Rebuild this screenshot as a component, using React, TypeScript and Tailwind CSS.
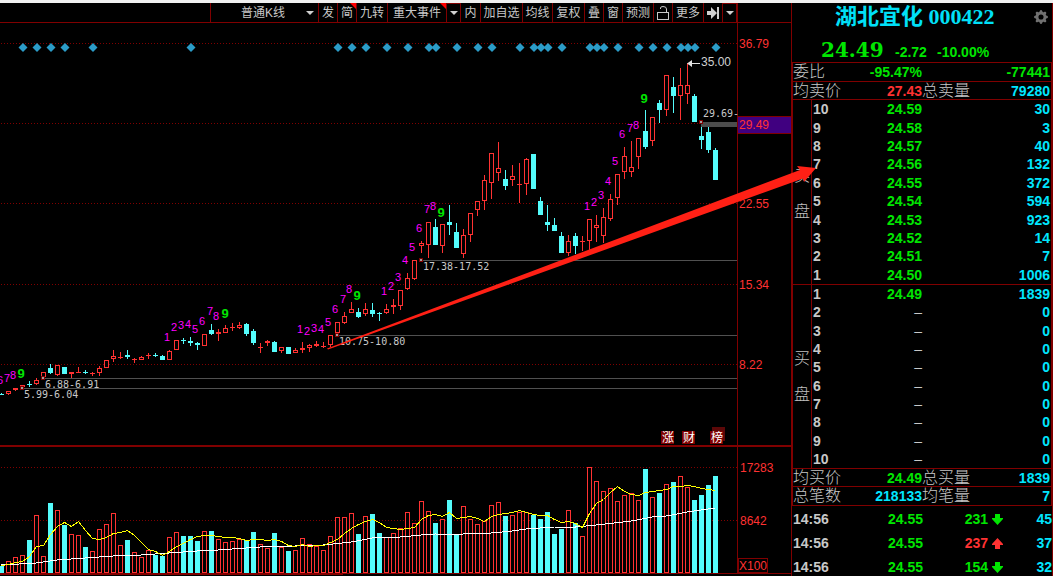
import React from "react";
import { BsGearFill } from "react-icons/bs";

type Candle = [kind: "r" | "f" | "c", high: number, top: number, bottom: number, low: number, volume: number];

// r = hollow rising, f = solid rising, c = falling; values are y positions on the shared chart canvas
const candles: Candle[] = [
  ["c", 393, 394, 395, 395, 566], ["r", 391, 391, 394, 395, 561], ["f", 388, 388, 390, 391, 557], ["f", 385, 385, 387, 388, 555],
  ["c", 381, 384, 385, 387, 540], ["r", 378, 380, 384, 385, 515], ["r", 372, 372, 377, 377, 556], ["c", 364, 368, 373, 374, 503],
  ["r", 365, 365, 375, 376, 510], ["c", 367, 367, 374, 374, 525], ["f", 372, 372, 374, 378, 534], ["f", 367, 372, 373, 373, 535],
  ["c", 370, 372, 373, 374, 547], ["f", 372, 373, 374, 376, 551], ["r", 366, 368, 373, 376, 529], ["r", 360, 360, 368, 368, 524],
  ["r", 350, 356, 359, 362, 513], ["f", 352, 357, 358, 359, 545], ["c", 350, 355, 357, 359, 540], ["f", 358, 359, 360, 363, 552],
  ["r", 356, 357, 360, 360, 557], ["f", 353, 355, 356, 359, 550], ["c", 353, 355, 356, 357, 555], ["c", 355, 356, 360, 360, 556],
  ["r", 350, 351, 360, 360, 537], ["r", 340, 340, 350, 350, 532], ["c", 338, 340, 341, 344, 536], ["c", 337, 341, 343, 346, 536],
  ["c", 342, 343, 345, 350, 541], ["r", 334, 334, 346, 346, 531], ["c", 324, 330, 334, 335, 531], ["f", 329, 332, 334, 341, 539],
  ["r", 325, 328, 333, 333, 542], ["f", 323, 327, 328, 331, 541], ["r", 322, 325, 328, 329, 539], ["c", 323, 324, 334, 336, 540],
  ["c", 329, 331, 343, 345, 532], ["f", 343, 347, 348, 353, 544], ["f", 340, 341, 343, 346, 548], ["c", 341, 342, 352, 352, 533],
  ["r", 347, 347, 351, 353, 547], ["c", 347, 347, 354, 354, 551], ["r", 348, 350, 353, 353, 550], ["f", 342, 348, 350, 353, 538],
  ["r", 344, 345, 348, 352, 544], ["f", 341, 344, 346, 347, 546], ["f", 342, 346, 347, 348, 550], ["r", 335, 335, 345, 347, 536],
  ["r", 322, 322, 333, 334, 517], ["r", 312, 316, 323, 324, 517], ["r", 302, 309, 313, 313, 513], ["c", 308, 312, 317, 318, 534],
  ["r", 303, 309, 314, 316, 516], ["c", 303, 310, 314, 317, 514], ["c", 312, 313, 314, 321, 533], ["r", 304, 309, 313, 314, 537],
  ["f", 299, 305, 307, 314, 533], ["r", 290, 290, 306, 310, 528], ["r", 273, 278, 289, 290, 512], ["r", 260, 260, 279, 280, 523],
  ["r", 241, 243, 246, 253, 501], ["r", 222, 222, 245, 258, 511], ["c", 219, 227, 245, 245, 523], ["r", 224, 224, 246, 253, 519],
  ["c", 205, 222, 225, 235, 500], ["c", 223, 232, 248, 248, 535], ["r", 229, 235, 254, 258, 506], ["r", 213, 213, 235, 242, 519],
  ["r", 201, 201, 210, 216, 524], ["r", 175, 180, 201, 210, 521], ["r", 153, 153, 183, 199, 505], ["r", 142, 168, 173, 181, 502],
  ["c", 170, 179, 186, 190, 516], ["r", 165, 176, 180, 186, 515], ["f", 163, 184, 185, 203, 512], ["r", 158, 159, 184, 195, 512],
  ["c", 154, 154, 189, 189, 515], ["c", 197, 201, 215, 215, 519], ["c", 205, 222, 225, 231, 512], ["c", 218, 225, 231, 231, 534],
  ["c", 232, 236, 253, 253, 529], ["r", 235, 241, 253, 256, 510], ["c", 233, 236, 246, 254, 523], ["f", 236, 241, 242, 251, 536],
  ["r", 219, 219, 241, 255, 467], ["r", 215, 225, 228, 242, 481], ["r", 208, 217, 236, 243, 491], ["r", 194, 199, 219, 221, 488],
  ["r", 174, 174, 198, 205, 501], ["r", 147, 156, 172, 179, 495], ["r", 141, 167, 172, 177, 493], ["r", 138, 138, 157, 169, 500],
  ["c", 110, 131, 147, 149, 469], ["r", 117, 117, 141, 146, 497], ["c", 100, 103, 110, 123, 493], ["r", 75, 75, 110, 116, 484],
  ["c", 77, 87, 96, 113, 482], ["r", 68, 85, 96, 120, 476], ["r", 63, 85, 94, 104, 487], ["c", 94, 96, 122, 122, 500],
  ["c", 127, 136, 140, 149, 495], ["c", 127, 132, 150, 153, 485], ["c", 148, 150, 180, 180, 476],
];

const fastAverage = [
  565, 564, 562, 561, 556, 546, 545, 534, 526, 522, 526, 521, 530, 538, 539, 537, 533, 532, 530, 535, 542, 549, 551, 555, 551, 546,
  543, 539, 536, 535, 535, 536, 537, 537, 538, 540, 539, 539, 540, 539, 541, 545, 546, 544, 546, 545, 545, 542, 539, 533, 528, 524,
  521, 519, 522, 527, 528, 529, 528, 527, 519, 515, 514, 516, 512, 518, 517, 516, 518, 521, 516, 514, 513, 512, 510, 512, 514, 515,
  515, 519, 522, 521, 523, 527, 513, 503, 499, 492, 486, 491, 494, 495, 492, 491, 490, 489, 486, 486, 485, 486, 488, 489, 490,
];

const slowAverage: [number, number][] = [
  [0, 565], [5, 563], [8, 560], [14, 557], [16, 556], [20, 555], [24, 553], [28, 551], [31, 550], [35, 548], [37, 547], [42, 546],
  [46, 545], [50, 542], [53, 538], [57, 537], [60, 535], [62, 534], [63, 535], [66, 534], [70, 533], [73, 531], [75, 529], [79, 527],
  [82, 527], [85, 525], [90, 521], [93, 517], [95, 516], [98, 512], [102, 508],
];

const events = [3, 5, 7, 9, 13, 27, 48, 50, 52, 55, 58, 61, 62, 65, 68, 70, 74, 76, 77, 78, 80, 84, 85, 86, 88, 91, 93, 95, 97, 98, 99, 102];

const counts: [number, number, number][] = [
  [6, 0, 380], [7, 7, 378], [8, 13, 375], [9, 21, 374],
  [1, 167, 337], [2, 174, 327], [3, 181, 325], [4, 188, 324], [5, 195, 329], [6, 202, 321], [7, 210, 311], [8, 216, 316], [9, 225, 314],
  [1, 300, 329], [2, 307, 331], [3, 314, 328], [4, 321, 329], [5, 328, 322], [6, 335, 309], [7, 343, 299], [8, 349, 289], [9, 357, 296],
  [1, 384, 291], [2, 391, 286], [3, 398, 277], [4, 405, 260], [5, 412, 247], [6, 419, 228], [7, 427, 209], [8, 433, 206], [9, 441, 213],
  [1, 587, 206], [2, 594, 202], [3, 601, 195], [4, 608, 181], [5, 615, 161], [6, 622, 134], [7, 630, 128], [8, 636, 125], [9, 644, 99],
];

const gaps: [string, number, number][] = [
  ["5.99-6.04", 22, 388],
  ["6.88-6.91", 43, 378],
  ["10.75-10.80", 337, 335],
  ["17.38-17.52", 421, 260],
];

const priceTicks: [string, number][] = [["36.79", 43], ["29.49", 124], ["22.55", 203], ["15.34", 284], ["8.22", 364]];
const volumeTicks: [string, number][] = [["17283", 467], ["8642", 520]];

const RED = "#ff3232";
const CYAN = "#54fcfc";
const LINE = "#800000";
const center = (i: number) => 1 + 7 * i;

function GridLine({ y }: { y: number }) {
  return <line x1="1" x2="737" y1={y + 0.5} y2={y + 0.5} stroke={LINE} strokeDasharray="1 2" />;
}

function PriceChart() {
  return (
    <svg viewBox="0 23 791 422" className="block w-full" shapeRendering="crispEdges" role="img" aria-label="K线图">
      {priceTicks.map(([t, y]) => <GridLine key={t} y={y === 124 ? 123 : y} />)}
      <line x1="737.5" x2="737.5" y1="23" y2="445" stroke={LINE} />
      <rect x="738" y="116" width="53" height="18" fill={LINE} />
      <rect x="738" y="117" width="53" height="16" fill="#400080" />
      {gaps.map(([t, x, y]) => <rect key={t} x={x} y={y} width={737 - x} height="1" fill="#505050" />)}
      <rect x="701" y="122" width="36" height="5" fill="#4c4c4c" />
      {events.map((i) => {
        const x = center(i) + 1;
        return <path key={i} d={`M${x - 4.5} 47.5L${x} 43L${x + 4.5} 47.5L${x} 52Z`} fill="#2b9cc8" shapeRendering="auto" />;
      })}
      {candles.map(([kind, high, top, bottom, low], i) => {
        const x = center(i);
        const color = kind === "c" ? CYAN : RED;
        return (
          <g key={i}>
            <rect x={x} y={high} width="1" height={Math.max(low - high, 1)} fill={color} />
            {kind === "r" ? (
              <rect x={x - 1.5} y={top + 0.5} width="4" height={bottom - top - 1} fill="#000" stroke={color} />
            ) : (
              <rect x={x - 2} y={top} width="5" height={bottom - top} fill={color} />
            )}
          </g>
        );
      })}
      {[...gaps, ["29.69", 701, 122] as [string, number, number]].map(([t, x, y]) => (
        <g key={t}>
          <rect x={x - 2} y={y - 2} width="4" height="4" fill={LINE} />
          <rect x={x - 1} y={y - 1} width="2" height="2" fill="#a0a0a0" />
        </g>
      ))}
      <g fontFamily='"DejaVu Sans Mono", "Liberation Mono", monospace' fontSize="10" fill="#c8c8c8">
        {gaps.map(([t, x, y]) => <text key={t} x={x + 2} y={y + 10}>{t}</text>)}
        <text x="703" y="117">29.69-</text>
      </g>
      <g fontFamily='"Liberation Sans", Arial, sans-serif' fontSize="12" textAnchor="middle">
        {counts.map(([n, x, y]) => (
          <text key={`${n}-${x}`} x={x} y={y + 4} fill={n === 9 ? "#00e600" : "#ff00ff"} fontWeight={n === 9 ? 700 : 400} fontSize={n === 9 ? 13 : 11}>
            {n}
          </text>
        ))}
      </g>
      <g fontFamily='"Liberation Sans", Arial, sans-serif' fontSize="12">
        <path d="M687 63.5L692 60V63H700V64H692V67Z" fill="#e0e0e0" shapeRendering="auto" />
        <text x="701" y="66" fill="#d0d0d0">35.00</text>
        {priceTicks.map(([t, y]) => <text key={t} x="739" y={y + 5} fill={RED}>{t}</text>)}
      </g>
      <rect x="712" y="427" width="13" height="14" fill="#5c0808" />
      {[["涨", 661], ["财", 682], ["榜", 710]].map(([t, x]) => (
        <g key={t}>
          <rect x={x} y="431" width="13" height="13" fill={LINE} />
          <text x={Number(x) + 1} y="442" fontSize="12" fill="#fff" fontFamily='"Noto Sans CJK SC", sans-serif'>{t}</text>
        </g>
      ))}
    </svg>
  );
}

function VolumeChart() {
  return (
    <svg viewBox="0 447 791 129" className="block w-full" shapeRendering="crispEdges" role="img" aria-label="成交量">
      {volumeTicks.map(([t, y]) => <GridLine key={t} y={y} />)}
      <line x1="737.5" x2="737.5" y1="447" y2="573" stroke={LINE} />
      {candles.map(([kind, , , , , top], i) =>
        kind === "c" ? (
          <rect key={i} x={center(i) - 2} y={top} width="5" height={573 - top} fill={CYAN} />
        ) : (
          <rect key={i} x={center(i) - 1.5} y={top + 0.5} width="4" height={572 - top} fill="#000" stroke={RED} />
        ),
      )}
      <polyline fill="none" stroke="#fff" points={slowAverage.map(([i, y]) => `${center(i) + 0.5},${y}`).join(" ")} />
      <polyline fill="none" stroke="#ff0" points={fastAverage.map((y, i) => `${center(i) + 0.5},${y + 0.5}`).join(" ")} />
      <rect x="0" y="573" width="791" height="1" fill={LINE} />
      <rect x="0" y="574" width="343" height="1" fill={LINE} />
      <rect x="738.5" y="558.5" width="29" height="14" fill="#000" stroke={LINE} />
      <g fontFamily='"Liberation Sans", Arial, sans-serif' fontSize="12" fill={RED}>
        {volumeTicks.map(([t, y]) => <text key={t} x="740" y={y + 5}>{t}</text>)}
        <text x="739" y="570">X100</text>
      </g>
    </svg>
  );
}

function Caret() {
  return (
    <svg viewBox="0 0 8 4" className="h-1 w-2" aria-hidden="true">
      <path d="M0 0H8L4 4Z" fill="#d0d0d0" />
    </svg>
  );
}

function Corner() {
  return (
    <svg viewBox="0 0 6 6" className="absolute right-0 top-0 size-1.5" aria-hidden="true">
      <path d="M0 0H6V6Z" fill="#f00" />
    </svg>
  );
}

const cell = "relative flex h-full shrink-0 items-center justify-center border-l border-[#800000]";

function Toolbar() {
  return (
    <div className="flex h-5 border-b border-[#800000] text-[12px] leading-4 text-[#c8c8c8]">
      <div className="flex w-[737px] justify-end">
        <label className={`${cell} w-[108px]`}>
          <select aria-label="K线类型" className="h-full w-full appearance-none bg-transparent pl-[30px] outline-none">
            <option>普通K线</option>
          </select>
          <span className="pointer-events-none absolute right-1"><Caret /></span>
        </label>
        <button className={`${cell} w-[19px]`}>发</button>
        <button className={`${cell} w-[19px]`}>简<Corner /></button>
        <button className={`${cell} w-[31px]`}>九转</button>
        <button className={`${cell} w-[59px]`}>重大事件<Corner /></button>
        <button aria-label="更多事件" className={`${cell} w-[15px] border-r border-t`}><Caret /></button>
        <button className={`${cell} w-[19px] border-l-0`}>内</button>
        <button className={`${cell} w-[42px]`}>加自选</button>
        <button className={`${cell} w-[30px]`}>均线</button>
        <button className={`${cell} w-[32px]`}>复权</button>
        <button className={`${cell} w-[19px]`}>叠</button>
        <button className={`${cell} w-[19px]`}>窗</button>
        <button className={`${cell} w-[31px]`}>预测</button>
        <button aria-label="解锁" className={`${cell} w-[19px]`}>
          <svg viewBox="0 0 12 14" className="h-3.5 w-3" fill="none" stroke="#c8c8c8" aria-hidden="true">
            <rect x="0.5" y="6.5" width="11" height="7" />
            <path d="M3.5 3V2Q3.5 0.5 6 0.5Q9.5 0.5 9.5 3V6.5" />
          </svg>
        </button>
        <button className={`${cell} w-[31px]`}>更多</button>
        <button aria-label="跳到最新" className={`${cell} w-[19px]`}>
          <svg viewBox="0 0 12 12" className="size-3" fill="#d0d0d0" aria-hidden="true">
            <path d="M0 4H4V0L10 6L4 12V8H0ZM10 0H12V12H10Z" />
          </svg>
        </button>
        <button aria-label="菜单" className={`${cell} w-[15px] border-r border-t`}><Caret /></button>
      </div>
      <div className="flex-1 border-l border-[#800000] bg-black" />
    </div>
  );
}

const sells: [string, string][] = [
  ["24.59", "30"], ["24.58", "3"], ["24.57", "40"], ["24.56", "132"], ["24.55", "372"],
  ["24.54", "594"], ["24.53", "923"], ["24.52", "14"], ["24.51", "7"], ["24.50", "1006"],
];

const buys: [string, string][] = [["24.49", "1839"], ...Array.from({ length: 9 }, (): [string, string] => ["–", "0"])];

function Book({ side, rows, descending }: { side: string; rows: [string, string][]; descending?: boolean }) {
  return (
    <table
      className={`${descending ? "h-[185px]" : "h-[184px]"} w-full table-fixed border-separate border-spacing-0 border-b border-[#800000] leading-4`}
    >
      <colgroup>
        <col className="w-[19px]" />
        <col className="w-[30px]" />
        <col className="w-[80px]" />
        <col />
      </colgroup>
      <tbody>
        {rows.map(([price, size], i) => (
          <tr key={i}>
            {i === 0 && (
              <th
                rowSpan={10}
                scope="rowgroup"
                className={`${descending ? "pt-1" : "pt-0"} border-r border-[#800000] px-0 pb-0 text-[16px] font-light text-[#c0c0c0]`}
              >
                <span className="flex flex-col items-center gap-5">
                  <span>{side}</span>
                  <span>盘</span>
                </span>
              </th>
            )}
            <td className="p-0 pl-px">{descending ? 10 - i : i + 1}</td>
            <td className={price === "–" ? "p-0 text-right font-normal" : "p-0 text-right text-[#00e600]"}>{price}</td>
            <td className="p-0 pr-px text-right text-[#00e6ff]">{size}</td>
          </tr>
        ))}
      </tbody>
    </table>
  );
}

interface StatProps {
  label: string;
  value: string;
  tone: string;
  label2?: string;
  value2: string;
  tone2: string;
  tall?: boolean;
}

function Stat({ label, value, tone, label2, value2, tone2, tall }: StatProps) {
  return (
    <div className={`${tall ? "h-[19px]" : "h-[18px]"} flex items-center border-b border-[#800000] leading-4`}>
      <span className="w-12 text-[16px] font-light">{label}</span>
      <span className={`w-[81px] text-right ${tone}`}>{value}</span>
      <span className="text-[16px] font-light">{label2}</span>
      <span className={`flex-1 pr-px text-right ${tone2}`}>{value2}</span>
    </div>
  );
}

const trades: [string, string, string, boolean, string][] = [
  ["14:56", "24.55", "231", false, "45"],
  ["14:56", "24.55", "237", true, "37"],
  ["14:56", "24.55", "154", false, "32"],
];

function QuotePanel() {
  return (
    <aside className="w-[262px] shrink-0 border-x border-[#800000] text-[14px] font-bold text-[#c8c8c8]">
      <header className="relative h-[59px]">
        <h1 className="pl-[43px] pt-0.5 font-['Liberation_Serif','Noto_Sans_CJK_SC',serif] text-[22px] font-bold leading-6 text-[#00e0f8]">
          湖北宜化 000422
        </h1>
        <button aria-label="设置" className="absolute right-1 top-[7px] text-[#707070]">
          <BsGearFill size={14} />
        </button>
        <p className="flex items-baseline pl-[29px] pt-[7px] text-[#00e600]">
          <span className="w-[74px] font-['DejaVu_Serif','Liberation_Serif',serif] text-[20px] font-bold leading-7">24.49</span>
          <span className="w-[42px]">-2.72</span>
          <span>-10.00%</span>
        </p>
      </header>
      <div className="border-x border-t border-[#800000]">
        <Stat label="委比" value="-95.47%" tone="text-[#00e600]" value2="-77441" tone2="text-[#00e600]" tall />
        <Stat label="均卖价" value="27.43" tone="text-[#ff3232]" label2="总卖量" value2="79280" tone2="text-[#00e6ff]" />
        <Book side="卖" rows={sells} descending />
        <Book side="买" rows={buys} />
        <Stat label="均买价" value="24.49" tone="text-[#00e600]" label2="总买量" value2="1839" tone2="text-[#00e6ff]" />
        <Stat label="总笔数" value="218133" tone="text-[#00e6ff]" label2="均笔量" value2="7" tone2="text-[#00e6ff]" tall />
      </div>
      <table className="mt-px w-full table-fixed border-separate border-spacing-0 leading-4">
        <tbody>
          {trades.map(([time, price, volume, up, count], i) => (
            <tr key={i} className="h-6">
              <td className="w-12 p-0 pl-px">{time}</td>
              <td className="w-[83px] p-0 text-right text-[#00e600]">{price}</td>
              <td className={up ? "w-[65px] p-0 text-right text-[#ff3232]" : "w-[65px] p-0 text-right text-[#00e600]"}>{volume}</td>
              <td className={up ? "p-0 pl-1 text-[#ff3232]" : "p-0 pl-1 text-[#00e600]"}>
                <svg viewBox="0 0 11 11" className="size-[11px]" fill="currentColor" aria-label={up ? "买入" : "卖出"}>
                  {up ? <path d="M5.5 0L11 6V7H8V11H3V7H0V6Z" /> : <path d="M5.5 11L11 5V4H8V0H3V4H0V5Z" />}
                </svg>
              </td>
              <td className="p-0 text-right text-[#00e6ff]">{count}</td>
            </tr>
          ))}
        </tbody>
      </table>
    </aside>
  );
}

export default function App() {
  return (
    <div className="relative min-h-screen overflow-hidden bg-black font-['Liberation_Sans','Noto_Sans_CJK_SC',sans-serif]">
      <div className="h-[3px] bg-[#f0f0f0]" />
      <div className="flex">
        <main className="min-w-0 flex-1">
          <Toolbar />
          <PriceChart />
          <div className="h-0.5 bg-[#800000]" />
          <VolumeChart />
        </main>
        <QuotePanel />
      </div>
      <svg viewBox="0 0 1053 576" className="pointer-events-none absolute left-0 top-0 w-full" aria-hidden="true">
        <path d="M327 348.5L800 170L797 166L816 168L804 182L803 178.5L328 349.5Z" fill="#ff2015" />
      </svg>
    </div>
  );
}
